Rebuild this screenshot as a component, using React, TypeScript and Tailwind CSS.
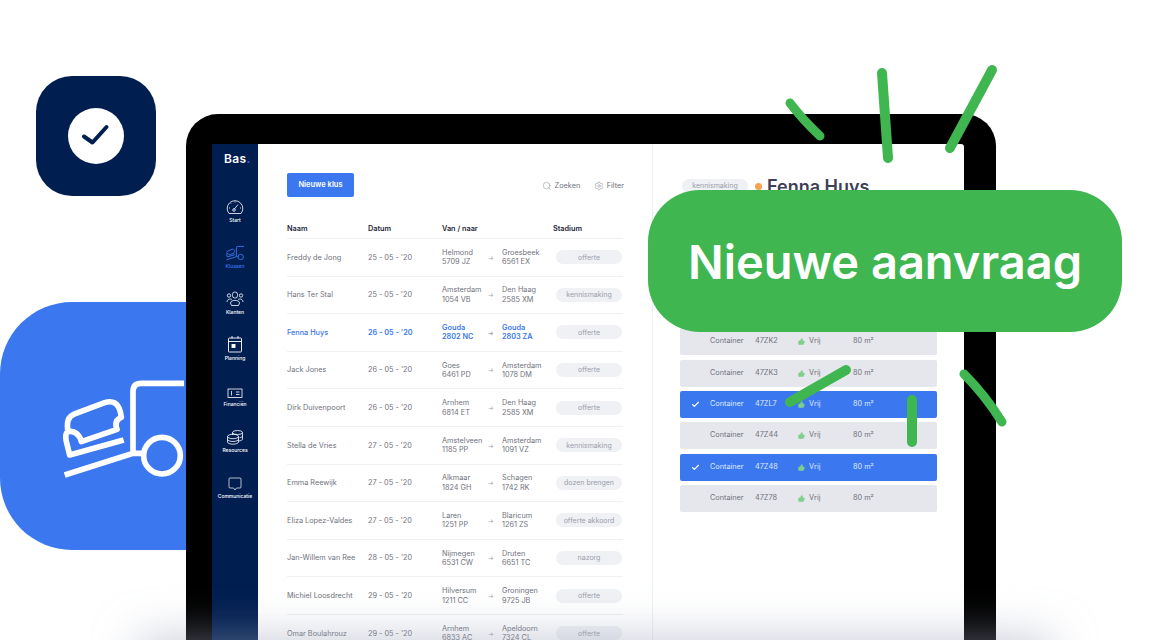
import { Check, Search, Settings, ThumbsUp } from "lucide-react";

const font = { fontFamily: "Inter, 'Liberation Sans', sans-serif" };

const rows = [
  ["Freddy de Jong", "25 - 05 - '20", "Helmond", "5709 JZ", "Groesbeek", "6561 EX", "offerte"],
  ["Hans Ter Stal", "25 - 05 - '20", "Amsterdam", "1054 VB", "Den Haag", "2585 XM", "kennismaking"],
  ["Fenna Huys", "26 - 05 - '20", "Gouda", "2802 NC", "Gouda", "2803 ZA", "offerte"],
  ["Jack Jones", "26 - 05 - '20", "Goes", "6461 PD", "Amsterdam", "1078 DM", "offerte"],
  ["Dirk Duivenpoort", "26 - 05 - '20", "Arnhem", "6814 ET", "Den Haag", "2585 XM", "offerte"],
  ["Stella de Vries", "27 - 05 - '20", "Amstelveen", "1185 PP", "Amsterdam", "1091 VZ", "kennismaking"],
  ["Emma Reewijk", "27 - 05 - '20", "Alkmaar", "1824 GH", "Schagen", "1742 RK", "dozen brengen"],
  ["Eliza Lopez-Valdes", "27 - 05 - '20", "Laren", "1251 PP", "Blaricum", "1261 ZS", "offerte akkoord"],
  ["Jan-Willem van Ree", "28 - 05 - '20", "Nijmegen", "6531 CW", "Druten", "6651 TC", "nazorg"],
  ["Michiel Loosdrecht", "29 - 05 - '20", "Hilversum", "1211 CC", "Groningen", "9725 JB", "offerte"],
  ["Omar Boulahrouz", "29 - 05 - '20", "Arnhem", "6833 AC", "Apeldoorn", "7324 CL", "offerte"],
];

const containers = [
  { id: "47ZK2", active: false },
  { id: "47ZK3", active: false },
  { id: "47ZL7", active: true },
  { id: "47Z44", active: false },
  { id: "47Z48", active: true },
  { id: "47Z78", active: false },
];

function Truck({ className, viewBox, stroke = 17 }: { className: string; viewBox: string; stroke?: number }) {
  return (
    <svg viewBox={viewBox} className={className} fill="none" stroke="currentColor" strokeWidth={stroke}>
      <path d="M205 425C200 395 205 380 225 372L315 338C340 330 355 340 362 365L365 382C350 388 345 400 352 418L245 455C240 435 225 420 205 425C195 430 198 445 200 455L210 495L372 450" strokeLinejoin="round" />
      <path d="M195 555L400 490H432M400 490V305Q400 280 425 280H620" />
      <circle cx="487" cy="497" r="55" />
    </svg>
  );
}

function NavIcon({ name }: { name: string }) {
  if (name === "Start") {
    return (
      <svg viewBox="0 0 18 16" className="h-4 w-[18px]" fill="none" stroke="currentColor" strokeWidth="0.8">
        <path d="M3 14.500A7.800 7.800 0 1 1 15 14.500Z" />
        <path d="M8 10.500L12 5.500M4 9H3M15 9H14M5.500 5L5 4.500M9 3.500V2.500" />
        <circle cx="8" cy="11" r="1.300" />
      </svg>
    );
  }
  if (name === "Klussen") {
    return <Truck className="h-4 w-[18px]" viewBox="185 265 370 300" stroke={18} />;
  }
  if (name === "Klanten") {
    return (
      <svg viewBox="0 0 18 16" className="h-4 w-[18px]" fill="none" stroke="currentColor" strokeWidth="0.8">
        <rect x="6.500" y="1" width="5" height="6" rx="2.300" />
        <circle cx="3" cy="4.500" r="1.700" />
        <circle cx="15" cy="4.500" r="1.700" />
        <path d="M1 11C1 8 4 7.500 6 8.500M17 11C17 8 14 7.500 12 8.500M4.500 12C4.500 8.500 13.500 8.500 13.500 12L12.500 14.500H5.500Z" />
      </svg>
    );
  }
  if (name === "Planning") {
    return (
      <svg viewBox="0 0 16 18" className="h-[18px] w-4" fill="none" stroke="currentColor" strokeWidth="0.9">
        <rect x="1.500" y="3" width="13" height="14" rx="0.800" />
        <path d="M1.500 6.500H14.500M5 1V3.500M11 1V3.500" />
        <rect x="5" y="9.500" width="3" height="3" fill="currentColor" />
      </svg>
    );
  }
  if (name === "Financiën") {
    return (
      <svg viewBox="0 0 16 12" className="h-[12px] w-[16px]" fill="none" stroke="currentColor" strokeWidth="0.8">
        <rect x="1" y="2" width="14" height="8.500" />
        <path d="M4.500 4V8.500M9 5H12.500M9 7.500H12.500" />
      </svg>
    );
  }
  if (name === "Resources") {
    return (
      <svg viewBox="0 0 18 16" className="h-4 w-[18px]" fill="none" stroke="currentColor" strokeWidth="0.8">
        <ellipse cx="11.500" cy="3.500" rx="5" ry="2" />
        <path d="M6.500 3.500V6M16.500 3.500V10C16.500 11 15 11.800 13 12M16.500 6.800C16.500 7.800 15.500 8.300 13.500 8.700" />
        <ellipse cx="7" cy="7.500" rx="5.500" ry="2.200" />
        <path d="M1.500 7.500V13C1.500 14.300 4 15.200 7 15.200C10 15.200 12.500 14.300 12.500 13V7.500M1.500 10.300C1.500 11.500 4 12.500 7 12.500C10 12.500 12.500 11.500 12.500 10.300" />
      </svg>
    );
  }
  return (
    <svg viewBox="0 0 14 14" className="h-[14px] w-[14px]" fill="none" stroke="currentColor" strokeWidth="0.7">
      <path d="M2 1H12Q13 1 13 2V10Q13 11 12 11H8.500L7 13L5.500 11H2Q1 11 1 10V2Q1 1 2 1Z" />
    </svg>
  );
}

const navItems = ["Start", "Klussen", "Klanten", "Planning", "Financiën", "Resources", "Communicatie"];

export default function App() {
  return (
    <div className="relative h-[640px] w-[1176px] overflow-hidden bg-white" style={font}>
      {/* floating tiles behind the tablet */}
      <div className="absolute left-[36px] top-[76px] flex h-[120px] w-[120px] items-center justify-center rounded-[36px] bg-[#001e50]">
        <div className="flex h-14 w-14 items-center justify-center rounded-full bg-white">
          <svg viewBox="0 0 32 32" className="h-8 w-8" fill="none" stroke="#001e50" strokeWidth="4" strokeLinecap="round" strokeLinejoin="round">
            <path d="M4 16.500L12.500 22.500L26.500 7" />
          </svg>
        </div>
      </div>
      <div className="absolute left-0 top-[302px] flex h-[248px] w-[260px] items-start rounded-[72px] bg-[#3b78ef] pl-[63.300px] pt-[78px] text-white">
        <Truck className="h-[98.300px] w-[120.700px]" viewBox="190 270 362 295" />
      </div>

      {/* tablet */}
      <div className="relative ml-[186px] mt-[114px] flex h-[600px] w-[810px] rounded-t-[32px] bg-black pl-[26px] pr-[32px] pt-[30px]">
        <div className="relative flex min-w-0 flex-1 overflow-hidden rounded-tr-[3px] bg-white">
          <aside className="flex w-[46px] shrink-0 flex-col items-center bg-[#001e50] text-white">
            <div className="mb-[12.500px] mt-[7px] w-full pl-[12px] text-[12px] font-semibold leading-[16px] tracking-[0.4px]">
              Bas<span className="text-[#3b78ef]">.</span>
            </div>
            {navItems.map((item) => (
              <div key={item} className={`flex h-[46px] w-full flex-col items-center justify-end pb-[2px] ${item === "Klussen" ? "text-[#3b78ef]" : "text-white"}`}>
                <NavIcon name={item} />
                <span className="mt-[1px] text-[5px] font-medium leading-[8px]">{item}</span>
              </div>
            ))}
          </aside>

          <main className="w-[395px] shrink-0 border-r border-[#eeeff2] pl-[29px] pr-[29px] pt-[29px]">
            <div className="flex h-6 items-center justify-between">
              <button className="h-6 w-[67px] rounded-[2px] bg-[#3b78ef] text-[7.500px] font-semibold text-white">Nieuwe klus</button>
              <div className="mt-[2px] flex items-center text-[7.300px] text-[#70727c]">
                <Search size={10} strokeWidth={1} />
                <span className="ml-[2.500px] mr-[14px]">Zoeken</span>
                <Settings size={10} strokeWidth={1} />
                <span className="ml-[2.500px] -mr-[1px]">Filter</span>
              </div>
            </div>
            <div className="mt-[26px] grid h-4 grid-cols-[81px_74px_111px_1fr] items-center border-b border-[#f0f1f4] pb-[2px] text-[7.300px] font-semibold text-[#23263a]">
              <span>Naam</span>
              <span>Datum</span>
              <span>Van / naar</span>
              <span>Stadium</span>
            </div>
            {rows.map((row, i) => (
              <div
                key={row[0]}
                className={`grid h-[37.600px] grid-cols-[81px_74px_47px_13px_51px_1fr] items-center border-b border-[#f0f1f4] text-[7.300px] leading-[9.400px] ${i === 2 ? "font-semibold text-[#3b78ef]" : "text-[#70727c]"}`}
              >
                <span className={i === 2 ? "font-medium" : ""}>{row[0]}</span>
                <span>{row[1]}</span>
                <span>
                  {row[2]}
                  <br />
                  {row[3]}
                </span>
                <span className="-ml-[1px] text-[6px] text-[#9a9dab]">→</span>
                <span>
                  {row[4]}
                  <br />
                  {row[5]}
                </span>
                <span className="ml-[3px] flex h-[14px] w-[66px] items-center justify-center rounded-full bg-[#f0f1f5] text-[7px] font-normal text-[#9a9dab]">{row[6]}</span>
              </div>
            ))}
          </main>

          <section className="min-w-0 flex-1 pl-[29px] pt-[31px]">
            <div className="flex h-[22px] items-center">
              <span className="flex h-[14px] w-[66px] items-center justify-center rounded-full bg-[#f0f1f5] text-[7px] text-[#9a9dab]">kennismaking</span>
              <span className="ml-[7px] h-[7px] w-[7px] rounded-full bg-[#f7a24f]" />
              <span className="ml-[5px] text-[18px] font-semibold text-[#3d4056]">Fenna Huys</span>
            </div>
            <div className="-ml-[2px] mt-[131.300px] flex w-[257px] flex-col gap-[4.330px]">
              {containers.map((c) => (
                <div
                  key={c.id}
                  className={`flex h-[27px] items-center rounded-[2px] text-[7.300px] ${c.active ? "bg-[#3b78ef] text-[#dfe8fb]" : "bg-[#e6e7ec] text-[#70727c]"}`}
                >
                  <span className="flex w-[30px] justify-center pl-[1px]">
                    {c.active && <Check size={9} strokeWidth={3} className="text-white" />}
                  </span>
                  <span className="w-[45px]">Container</span>
                  <span className="w-[43px]">{c.id}</span>
                  <ThumbsUp size={7} fill="#7fd08d" stroke="#7fd08d" className="mr-[4px]" />
                  <span className="w-[44px]">Vrij</span>
                  <span>80 m²</span>
                </div>
              ))}
            </div>
          </section>
        </div>
      </div>

      {/* soft fade at the bottom edge */}
      <div className="absolute left-[170px] top-[668px] h-[30px] w-[850px] bg-[#9aa3b8] shadow-[0_0_45px_30px_rgba(154,163,184,0.55)]" />

      {/* callout */}
      <div className="absolute left-[648px] top-[190px] flex h-[142px] w-[474px] items-center justify-center rounded-[52px] bg-[#3fb64f] pt-[2px] text-[47px] font-semibold text-white">
        Nieuwe aanvraag
      </div>

      {/* green marker strokes */}
      <svg className="pointer-events-none absolute inset-0 h-[640px] w-[1176px]" viewBox="0 0 1176 640" fill="none" stroke="#3fb64f" strokeLinecap="round">
        <path d="M790 103Q803 120 820 136" strokeWidth="9" />
        <path d="M882 73L888 158" strokeWidth="10" />
        <path d="M992 70L950 148" strokeWidth="10" />
        <path d="M846 370L790 402" strokeWidth="10" />
        <path d="M912 400V442" strokeWidth="10" />
        <path d="M964 374Q985 395 1002 422" strokeWidth="9" />
      </svg>
    </div>
  );
}
